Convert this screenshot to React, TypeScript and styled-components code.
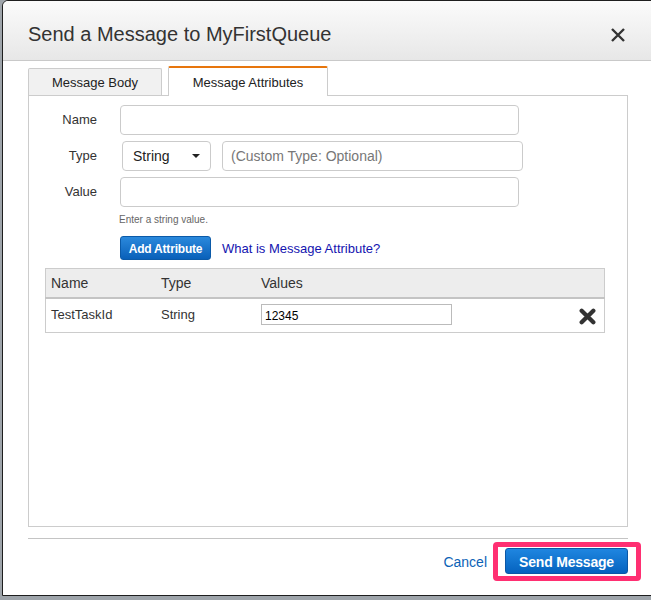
import React, { FC } from 'react'
import styled, { createGlobalStyle } from 'styled-components'

const GlobalStyle = createGlobalStyle`
    html, body {
        margin: 0;
        padding: 0;
        background: #9ea4aa;
        overflow: hidden;
        font-family: "Liberation Sans", Arial, Helvetica, sans-serif;
    }
`

const Backdrop = styled.div`
    width: 651px;
    height: 600px;
    padding-left: 2px;
    box-sizing: border-box;
    overflow: hidden;
`

const Modal = styled.div`
    width: 700px;
    height: 596px;
    box-sizing: border-box;
    border: 1px solid #1e1e1e;
    border-top-left-radius: 6px;
    background: #fff;
    overflow: hidden;
    display: flex;
    flex-direction: column;
`

const Header = styled.div`
    height: 60px;
    box-sizing: border-box;
    padding: 8px 0 0 25px;
    display: flex;
    align-items: center;
    background: linear-gradient(#fbfbfb, #e7e7e7);
    border-bottom: 1px solid #c9c9c9;
    border-top-left-radius: 5px;

    h1 {
        margin: 0;
        font-size: 20px;
        font-weight: normal;
        color: #333;
        width: 582px;
    }
`

const CloseButton = styled.button`
    border: none;
    background: none;
    padding: 0;
    width: 16px;
    height: 16px;
    display: flex;
    cursor: pointer;
`

const Body = styled.div`
    padding: 5px 0 0 25px;
    width: 600px;
`

const Tabs = styled.div`
    display: flex;
    gap: 6px;
    align-items: flex-end;
    height: 29px;
`

const Tab = styled.div<{ $active?: boolean }>`
    box-sizing: border-box;
    width: ${p => p.$active ? '160px' : '134px'};
    height: ${p => p.$active ? '30px' : '27px'};
    margin-bottom: ${p => p.$active ? '-1px' : '0'};
    position: relative;
    z-index: 1;
    display: flex;
    align-items: center;
    justify-content: center;
    font-size: 13px;
    color: #222;
    background: ${p => p.$active ? '#fff' : '#f1f1f1'};
    border: 1px solid #ccc;
    border-top: ${p => p.$active ? '2px solid #e7760d' : '1px solid #ccc'};
    border-bottom: none;
    border-radius: 2px 2px 0 0;
    padding-top: 1px;
`

const Panel = styled.div`
    width: 600px;
    height: 432px;
    box-sizing: border-box;
    border: 1px solid #ccc;
    padding-top: 9px;
`

const Form = styled.div`
    display: grid;
    grid-template-columns: 68px auto;
    column-gap: 23px;
    row-gap: 6px;
    align-items: center;
`

const Label = styled.label`
    font-size: 13px;
    color: #333;
    text-align: right;
    margin-top: -2px;
`

const TextInput = styled.input<{ $width: number }>`
    width: ${p => p.$width}px;
    height: 30px;
    box-sizing: border-box;
    border: 1px solid #cbcbcb;
    border-radius: 4px;
    padding: 0 8px;
    font-family: inherit;
    font-size: 14px;
    color: #333;
    outline: none;

    &::placeholder {
        color: #777;
    }
`

const TypeRow = styled.div`
    display: flex;
    gap: 11px;
    padding-left: 2px;
`

const Select = styled.div`
    width: 89px;
    height: 30px;
    box-sizing: border-box;
    border: 1px solid #cbcbcb;
    border-radius: 4px;
    display: flex;
    align-items: center;
    justify-content: space-between;
    padding: 0 10px 0 10px;
    font-size: 14px;
    color: #222;

    &::after {
        content: '';
        border-left: 4px solid transparent;
        border-right: 4px solid transparent;
        border-top: 4px solid #222;
    }
`

const Helper = styled.div`
    margin: 7px 0 0 90px;
    font-size: 10px;
    color: #666;
`

const Actions = styled.div`
    margin: 11px 0 0 91px;
    display: flex;
    align-items: center;
    gap: 11px;
`

const SmallButton = styled.button`
    height: 24px;
    width: 91px;
    box-sizing: border-box;
    border: 1px solid #0b5aa8;
    border-radius: 3px;
    background: linear-gradient(#2b89dc, #0960b9);
    color: #fff;
    font-family: inherit;
    font-weight: bold;
    font-size: 12px;
    padding: 2px 0 0;
    letter-spacing: -0.2px;
`

const HelpLink = styled.a`
    font-size: 13px;
    color: #1414b0;
    text-decoration: none;
`

const Table = styled.table`
    margin: 8px 0 0 16px;
    width: 560px;
    border-collapse: collapse;
    border: 1px solid #ccc;
    font-size: 13px;
    color: #333;

    th {
        background: #ededed;
        height: 28px;
        text-align: left;
        font-weight: normal;
        font-size: 14px;
        padding: 0 0 0 5px;
        border-bottom: 2px solid #c4c4c4;
    }

    td {
        height: 34px;
        box-sizing: border-box;
        vertical-align: top;
        padding: 8px 0 0 5px;
    }
`

const ValueCell = styled.td`
    && {
        padding: 5px 0 0 5px;
    }
`

const ValueInput = styled.input`
    width: 191px;
    height: 21px;
    box-sizing: border-box;
    border: 1px solid #bbb;
    margin: 0;
    padding: 2px 0 0 3px;
    font-family: inherit;
    font-size: 12px;
    color: #000;
    outline: none;
    display: block;
`

const RemoveCell = styled.td`
    text-align: right;
    && {
        padding: 9px 8px 0 0;
    }
`

const Separator = styled.div`
    margin-top: 11px;
    width: 600px;
    border-top: 1px solid #c4c4c4;
`

const Footer = styled.div`
    width: 600px;
    margin-top: 3px;
    display: flex;
    justify-content: flex-end;
    align-items: center;
`

const CancelLink = styled.a`
    font-size: 14px;
    color: #0b62b6;
    text-decoration: none;
    margin-right: 6px;
    margin-top: 1px;
`

const Highlight = styled.div`
    border: 5px solid #ff2f72;
    border-radius: 4px;
    padding: 1px 8px 2px 7px;
    margin-right: -13px;
    display: flex;
`

const PrimaryButton = styled.button`
    width: 123px;
    height: 26px;
    box-sizing: border-box;
    border: 1px solid #0b57a6;
    border-radius: 3px;
    background: linear-gradient(#1f86e0, #0563bf);
    color: #fff;
    font-family: inherit;
    font-weight: bold;
    font-size: 14px;
    padding: 1px 0 0;
    letter-spacing: -0.2px;
`

const CloseIcon: FC = () => (
    <svg width="16" height="16" viewBox="0 0 16 16">
        <path d="M2 2 L14 14 M14 2 L2 14" stroke="#333" strokeWidth="2.4" strokeLinecap="butt" />
    </svg>
)

const RemoveIcon: FC = () => (
    <svg width="17" height="17" viewBox="0 0 16 16">
        <path d="M2.5 2.5 L13.5 13.5 M13.5 2.5 L2.5 13.5" stroke="#333" strokeWidth="4" strokeLinecap="round" />
    </svg>
)

const App: FC = () => {
    return (
        <>
            <GlobalStyle />
            <Backdrop>
                <Modal>
                    <Header>
                        <h1>Send a Message to MyFirstQueue</h1>
                        <CloseButton><CloseIcon /></CloseButton>
                    </Header>
                    <Body>
                        <Tabs>
                            <Tab>Message Body</Tab>
                            <Tab $active>Message Attributes</Tab>
                        </Tabs>
                        <Panel>
                            <Form>
                                <Label>Name</Label>
                                <TextInput $width={399} readOnly />
                                <Label>Type</Label>
                                <TypeRow>
                                    <Select>String</Select>
                                    <TextInput $width={301} placeholder="(Custom Type: Optional)" readOnly />
                                </TypeRow>
                                <Label>Value</Label>
                                <TextInput $width={399} readOnly />
                            </Form>
                            <Helper>Enter a string value.</Helper>
                            <Actions>
                                <SmallButton>Add Attribute</SmallButton>
                                <HelpLink href="#">What is Message Attribute?</HelpLink>
                            </Actions>
                            <Table>
                                <thead>
                                    <tr>
                                        <th style={{ width: 105 }}>Name</th>
                                        <th style={{ width: 95 }}>Type</th>
                                        <th>Values</th>
                                        <th></th>
                                    </tr>
                                </thead>
                                <tbody>
                                    <tr>
                                        <td>TestTaskId</td>
                                        <td>String</td>
                                        <ValueCell><ValueInput defaultValue="12345" /></ValueCell>
                                        <RemoveCell><RemoveIcon /></RemoveCell>
                                    </tr>
                                </tbody>
                            </Table>
                        </Panel>
                        <Separator />
                        <Footer>
                            <CancelLink href="#">Cancel</CancelLink>
                            <Highlight>
                                <PrimaryButton>Send Message</PrimaryButton>
                            </Highlight>
                        </Footer>
                    </Body>
                </Modal>
            </Backdrop>
        </>
    )
}

export default App
